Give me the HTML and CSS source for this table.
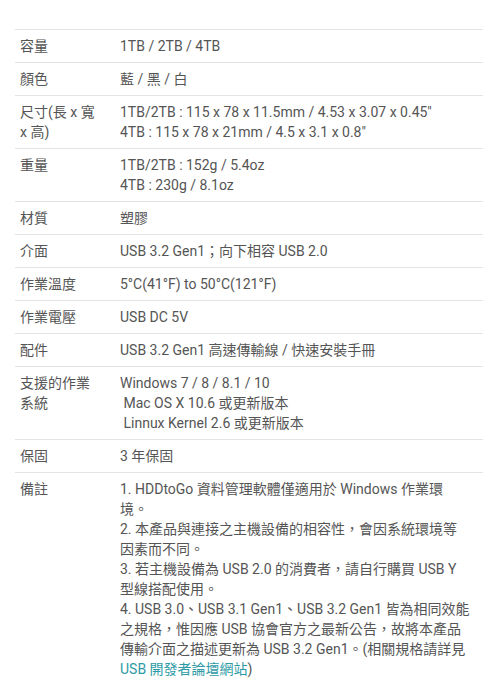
FILE: index.html
```html
<!DOCTYPE html>
<html lang="zh-Hant">
<head>
  <meta charset="UTF-8">
  <meta name="viewport" content="width=device-width, initial-scale=1.0">
  <title>規格</title>
  <link rel="stylesheet" href="styles.css">
</head>
<body>
  <div class="spec">
    <table class="spec-table">
      <tr>
        <td class="label">容量</td>
        <td class="value">1TB / 2TB / 4TB</td>
      </tr>
      <tr>
        <td class="label">顏色</td>
        <td class="value">藍 / 黑 / 白</td>
      </tr>
      <tr>
        <td class="label">尺寸(長 x 寬 x 高)</td>
        <td class="value">1TB/2TB : 115 x 78 x 11.5mm / 4.53 x 3.07 x 0.45"<br>4TB : 115 x 78 x 21mm / 4.5 x 3.1 x 0.8"</td>
      </tr>
      <tr>
        <td class="label">重量</td>
        <td class="value">1TB/2TB : 152g / 5.4oz<br>4TB : 230g / 8.1oz</td>
      </tr>
      <tr>
        <td class="label">材質</td>
        <td class="value">塑膠</td>
      </tr>
      <tr>
        <td class="label">介面</td>
        <td class="value">USB 3.2 Gen1；向下相容 USB 2.0</td>
      </tr>
      <tr>
        <td class="label">作業溫度</td>
        <td class="value">5°C(41°F) to 50°C(121°F)</td>
      </tr>
      <tr>
        <td class="label">作業電壓</td>
        <td class="value">USB DC 5V</td>
      </tr>
      <tr>
        <td class="label">配件</td>
        <td class="value">USB 3.2 Gen1 高速傳輸線 / 快速安裝手冊</td>
      </tr>
      <tr>
        <td class="label">支援的作業系統</td>
        <td class="value">Windows 7 / 8 / 8.1 / 10<br>&nbsp;Mac OS X 10.6 或更新版本<br>&nbsp;Linnux Kernel 2.6 或更新版本</td>
      </tr>
      <tr>
        <td class="label">保固</td>
        <td class="value">3 年保固</td>
      </tr>
      <tr>
        <td class="label">備註</td>
        <td class="value">1. HDDtoGo 資料管理軟體僅適用於 Windows 作業環境。<br>2. 本產品與連接之主機設備的相容性，會因系統環境等因素而不同。<br>3. 若主機設備為 USB 2.0 的消費者，請自行購買 USB Y 型線搭配使用。<br>4. USB 3.0、USB 3.1 Gen1、USB 3.2 Gen1 皆為相同效能之規格，惟因應 USB 協會官方之最新公告，故將本產品傳輸介面之描述更新為 USB 3.2 Gen1。(相關規格請詳見<a href="#">USB 開發者論壇網站</a>)</td>
      </tr>
    </table>
  </div>
</body>
</html>
```

FILE: styles.css
```css
body {
  margin: 0;
  background-color: #fff;
  color: #555;
  font-family: Roboto, 'Noto Sans CJK TC', sans-serif;
  font-size: 14px;
  line-height: 20px;
}
.spec {
  padding: 29px 10px 0 15px;
}
.spec-table {
  width: 100%;
  border-collapse: collapse;
  table-layout: fixed;
}
.spec-table td {
  border-top: 1px solid #e3e3e3;
  padding: 6px 0;
  vertical-align: top;
}
.spec-table .label {
  width: 80px;
  padding-left: 5px;
  padding-right: 15px;
}
.spec-table .value {
  padding-left: 5px;
  padding-right: 13px;
}
.spec-table a {
  color: #2e9aa6;
  text-decoration: none;
}
```
